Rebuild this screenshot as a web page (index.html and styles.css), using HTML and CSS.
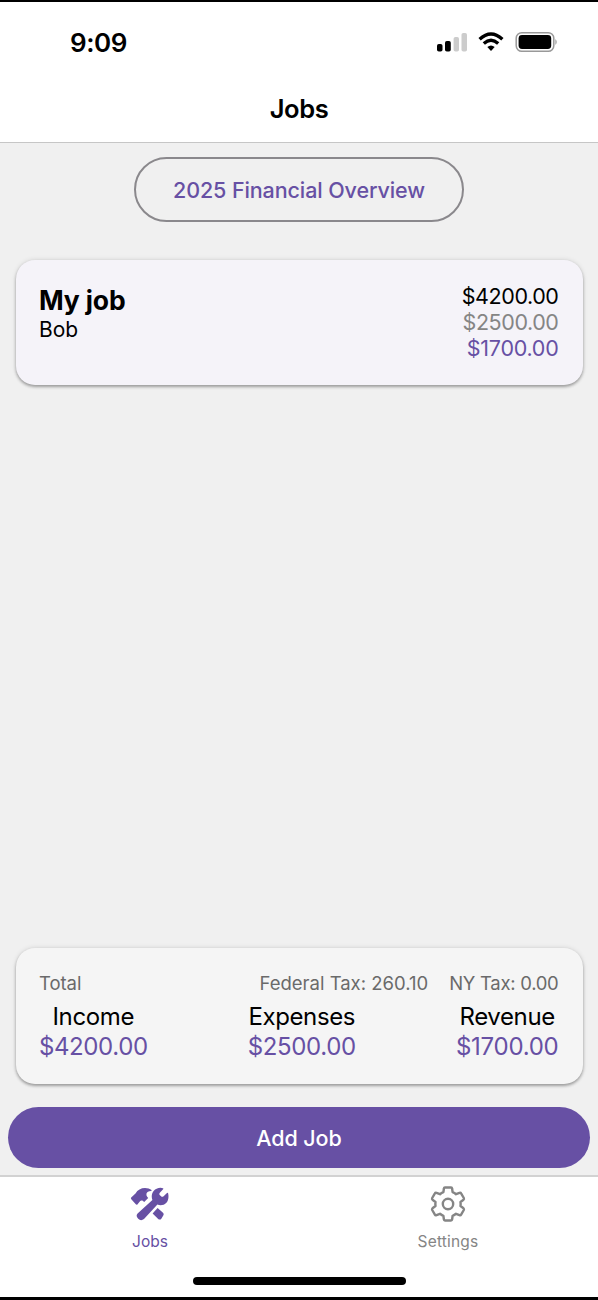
FILE: index.html
```
<!DOCTYPE html>
<html lang="en">
<head>
<meta charset="utf-8">
<title>Jobs</title>
<link rel="stylesheet" href="styles.css">
</head>
<body>
<div class="app">
  <header class="header">
    <div class="status">
      <span class="time">9:09</span>
      <svg class="status-icons" width="122" height="22" viewBox="0 0 122 22">
        <rect x="1" y="13" width="5.5" height="7.5" rx="1.8"/>
        <rect x="9" y="10" width="5.8" height="10.5" rx="1.8"/>
        <rect x="17.6" y="6" width="5.4" height="14.5" rx="1.8" fill="#ccc"/>
        <rect x="25.5" y="2" width="5.5" height="18.5" rx="1.8" fill="#ccc"/>
        <g fill="none" stroke="#000" stroke-width="3.4">
          <path d="M43.6 8.2Q55 -2.2 66.4 8.2"/>
          <path d="M47.8 12.4Q55 6 62.2 12.4"/>
        </g>
        <path d="M51.3 16Q55 12.8 58.7 16L55 20Z"/>
        <rect x="80.2" y="1.7" width="37.6" height="18.6" rx="5.6" fill="none" stroke="#999" stroke-width="1.5"/>
        <rect x="82.6" y="4" width="32.6" height="14" rx="3.4"/>
        <path d="M119.4 8Q122 11 119.4 14Z" fill="#999"/>
      </svg>
    </div>
    <h1 class="title">Jobs</h1>
  </header>
  <main class="content">
    <button class="overview"><span>2025 Financial Overview</span></button>
    <section class="card job">
      <div>
        <h2 class="job-name">My job</h2>
        <div class="client">Bob</div>
      </div>
      <div class="amounts">
        <div>$4200.00</div>
        <div class="muted">$2500.00</div>
        <div class="accent profit">$1700.00</div>
      </div>
    </section>
    <section class="card totals">
      <div class="taxes">
        <span>Total</span>
        <span class="federal">Federal Tax: 260.10</span>
        <span class="state">NY Tax: 0.00</span>
      </div>
      <div class="summary">
        <div><div>Income</div><div class="accent">$4200.00</div></div>
        <div><div>Expenses</div><div class="accent">$2500.00</div></div>
        <div><div>Revenue</div><div class="accent profit">$1700.00</div></div>
      </div>
    </section>
    <button class="add"><span>Add Job</span></button>
  </main>
  <nav class="tabs">
    <a class="tab active">
      <svg width="40" height="36" viewBox="0 0 40 36" fill="currentColor">
        <path d="M1.3 13.2Q.5 12.4 1.2 11.6L5.5 7.4C7.5 4 11 2 15 2C17.5 2 20 2.7 21.5 4Q22 4.8 21 5C18.5 5 17 6 16.5 7.5Q16 9.2 17.2 10.8L18.2 12L14.2 16.1L12.4 14.6Q11 14 10.2 15L7.4 18.4Q6.6 19.2 5.8 18.3Z"/>
        <path d="M7.6 27.6L22.4 13.9C20.8 9.5 22.2 4.6 26.6 2.7Q30 1.2 33 2.2Q33.8 2.6 33.1 3.3L29.8 6.8Q28.7 8 29.7 9.1L31.3 10.5Q32.4 11.3 33.6 10.3L37 7Q37.8 6.3 38.1 7.3C39.4 12.6 37.5 17.4 33.6 18.8Q30.2 19.8 27.4 18.6L14 33Q11 35.4 8.2 32.8Q5.4 30 7.6 27.6Z"/>
        <path d="M22.6 27.4L27.6 22L33 26.8Q34.3 28 33.4 29.3L31.5 32.4Q30 34.4 28.2 33Z"/>
      </svg>
      <span>Jobs</span>
    </a>
    <a class="tab settings">
      <svg width="40" height="36" viewBox="0 0 40 36" fill="none" stroke="currentColor" stroke-width="2.4" stroke-linejoin="round">
        <path d="M17 1.5H23Q24 1.5 24.1 2.5L24.6 6.2Q26.5 7 28 8.2L31.5 6.8Q32.6 6.4 33.1 7.4L35.8 12Q36.3 13 35.5 13.7L32.5 16Q32.8 18 32.5 20L35.5 22.3Q36.3 23 35.8 24L33.1 28.6Q32.6 29.6 31.5 29.2L28 27.8Q26.5 29 24.6 29.8L24.1 33.5Q24 34.5 23 34.5H17Q16 34.5 15.9 33.5L15.4 29.8Q13.5 29 12 27.8L8.5 29.2Q7.4 29.6 6.9 28.6L4.2 24Q3.7 23 4.5 22.3L7.5 20Q7.2 18 7.5 16L4.5 13.7Q3.7 13 4.2 12L6.9 7.4Q7.4 6.4 8.5 6.8L12 8.2Q13.5 7 15.4 6.2L15.9 2.5Q16 1.5 17 1.5Z"/>
        <circle cx="20" cy="18" r="5.2"/>
      </svg>
      <span>Settings</span>
    </a>
    <div class="home"></div>
  </nav>
</div>
</body>
</html>
```
FILE: styles.css
```
* { box-sizing: border-box; }
body { margin: 0; font-family: Inter, "Liberation Sans", sans-serif; color: #000; }
button { font: inherit; padding: 0; cursor: pointer; }
.app { height: 1300px; display: flex; flex-direction: column; border-top: 2px solid #000; border-bottom: 3px solid #000; background: #f0f0f0; }
.header { height: 141px; flex: none; background: #fff; border-bottom: 1px solid #c6c6c6; }
.status { height: 80px; display: flex; justify-content: space-between; align-items: center; padding: 0 40px 0 70px; }
.time { font-size: 26px; font-weight: 600; letter-spacing: -.4px; }
.title { margin: 0; height: 53px; line-height: 53px; text-align: center; font-size: 25.5px; font-weight: 600; letter-spacing: -.4px; }
.content { flex: 1; display: flex; flex-direction: column; }
.overview { width: 330px; height: 65px; margin: 14px 0 38px 134px; border: 2px solid #8a888c; border-radius: 33px; background: none; color: #6750a4; font-size: 21.5px; font-weight: 500; letter-spacing: -.1px; }
.card { margin: 0 15.5px; border-radius: 19px; box-shadow: 0 2px 3px rgba(0,0,0,.3), 0 0 5px rgba(0,0,0,.13); }
.job { height: 125px; display: flex; justify-content: space-between; padding: 23px 24px 0 23.4px; background: #f5f3f9; }
.job-name { margin: 0; font-size: 26.5px; font-weight: 700; line-height: 34px; letter-spacing: -.1px; }
.client { margin-top: 1px; font-size: 21px; line-height: 24px; }
.amounts { text-align: right; font-size: 21.5px; line-height: 26px; letter-spacing: -.42px; }
.muted { color: #858585; }
.accent { color: #6750a4; }
.profit { letter-spacing: -.25px; }
.totals { height: 136px; margin-top: auto; padding: 22px 24px 0 23.4px; background: #f5f5f5; }
.taxes { display: flex; font-size: 18.5px; line-height: 26px; color: #6a6a6a; }
.federal { margin-left: auto; margin-right: 21px; }
.state { letter-spacing: -.28px; }
.summary { display: flex; justify-content: space-between; margin-top: 6px; font-size: 24px; line-height: 30px; text-align: center; letter-spacing: -.38px; }
.add { height: 61px; flex: none; margin: 23px 8px 7px; border: 0; border-radius: 31px; background: #6750a4; color: #fff; font-size: 21.5px; font-weight: 500; letter-spacing: -.1px; }
.tabs { height: 122px; flex: none; position: relative; display: flex; background: #fff; border-top: 2px solid #d2d2d2; }
.tab { width: 50%; display: flex; flex-direction: column; align-items: center; padding-top: 9px; color: #858585; font-size: 15.5px; line-height: 20px; }
.tab span { margin-top: 10px; }
.settings { padding-right: 1px; letter-spacing: .2px; }
.active { padding-left: 1px; color: #6750a4; }
.home { position: absolute; left: 193px; bottom: 12px; width: 213px; height: 8px; border-radius: 4px; background: #000; }
```
